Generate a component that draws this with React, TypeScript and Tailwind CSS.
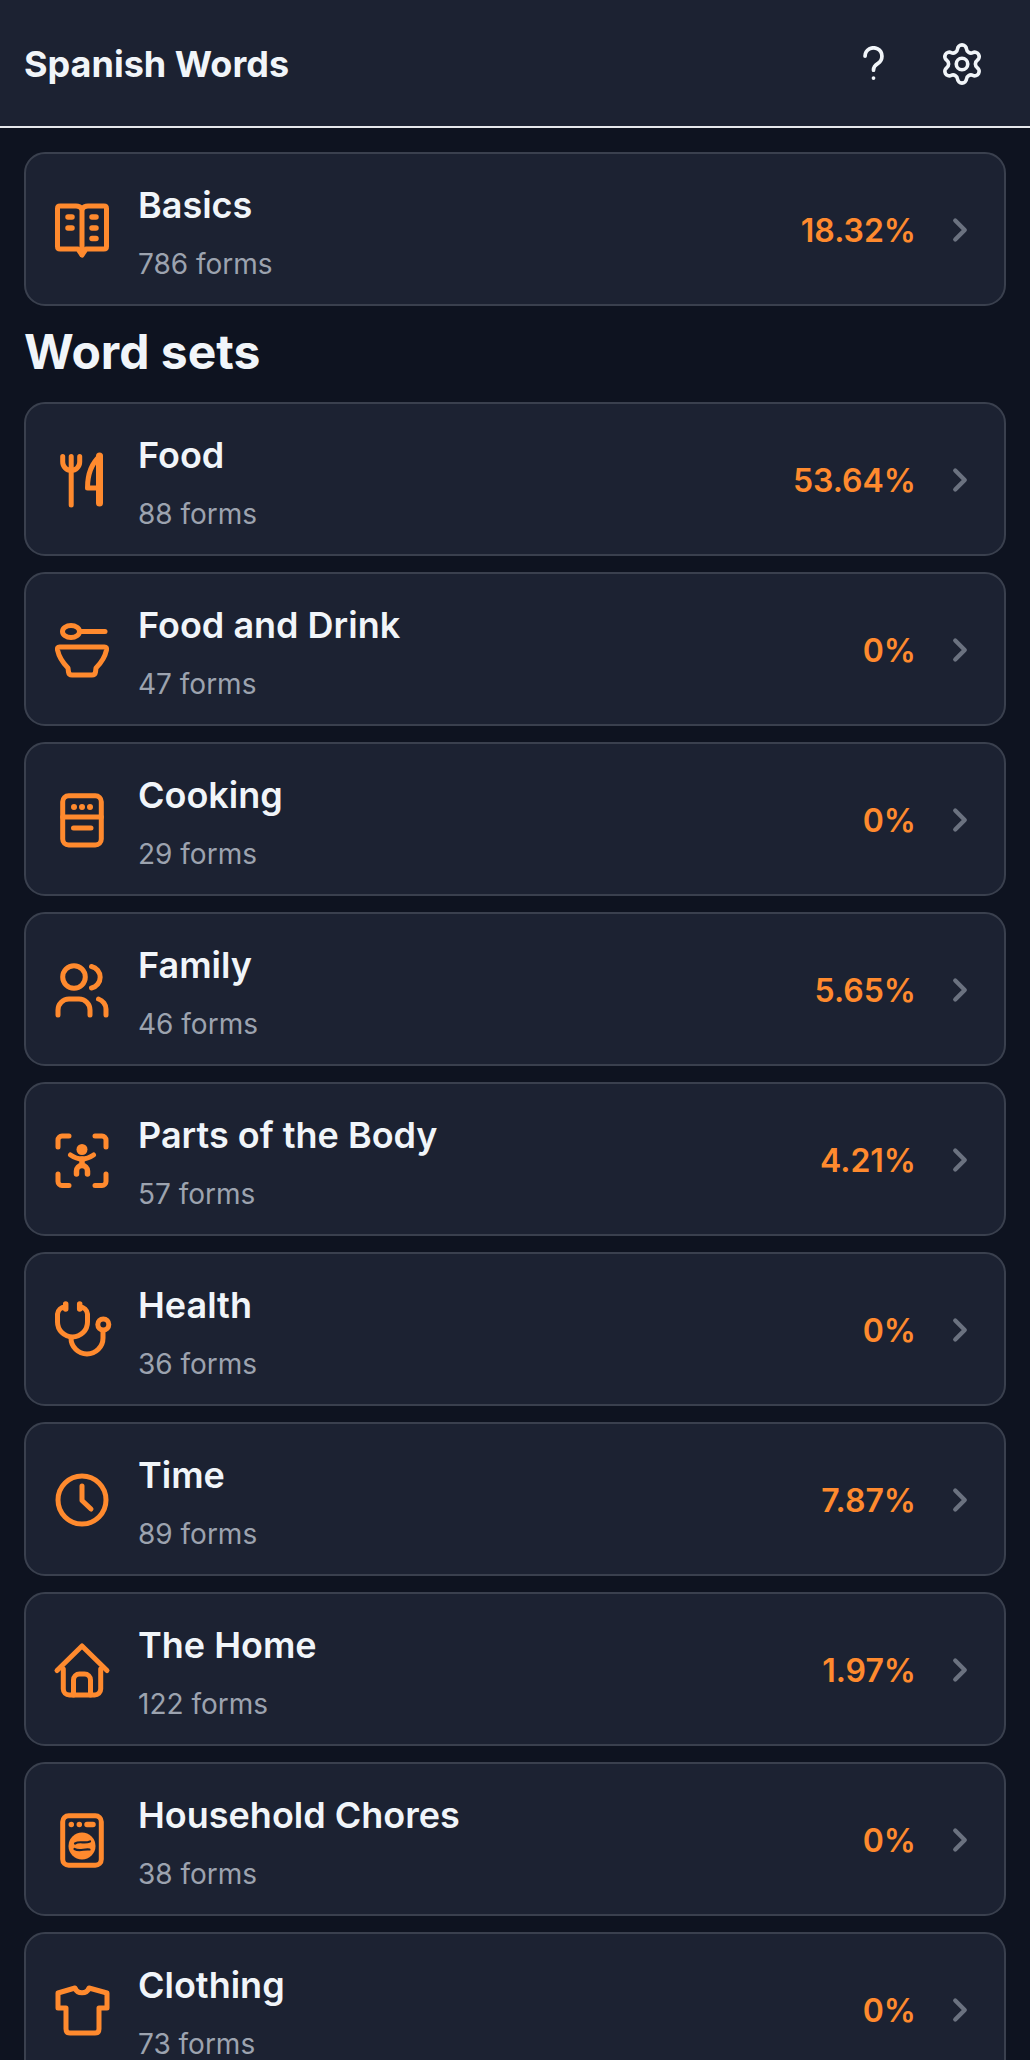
import { ChevronRight, Settings } from "lucide-react";
import type { ReactNode } from "react";

type WordSet = {
  name: string;
  forms: string;
  percent: string;
  icon: ReactNode;
};

function Glyph({ children }: { children: ReactNode }) {
  return (
    <svg
      viewBox="0 0 64 64"
      fill="none"
      stroke="currentColor"
      strokeWidth={5}
      strokeLinecap="round"
      strokeLinejoin="round"
      className="h-16 w-16 shrink-0 text-[#ff8a2e]"
    >
      {children}
    </svg>
  );
}

const basicsIcon = (
  <Glyph>
    <path d="M10 9H26Q30 9 32 12Q34 9 38 9H54Q56.5 9 56.5 11.5V49.5Q56.5 52 54 52H36L32 58L28 52H10Q7.5 52 7.5 49.5V11.5Q7.5 9 10 9Z" />
    <path d="M32 12V56" />
    <path strokeWidth={5.5} d="M18 20H22M18 31H22M42 20H46M42 31H46M42 41.5H46" />
  </Glyph>
);

const foodIcon = (
  <Glyph>
    <path d="M12.7 9.5V15a8.5 8.5 0 0 0 17 0V9.5M21.2 9.5V58" />
    <path d="M50 9C42 16 37.5 28 37.5 41H50Z" />
    <path strokeWidth={7} d="M49.5 9V56" />
  </Glyph>
);

const drinkIcon = (
  <Glyph>
    <ellipse cx="21" cy="14.5" rx="8.5" ry="6" />
    <path d="M29.5 14.5H55" />
    <path d="M9.5 30H54.5Q57 30 56.5 33C55 40 50 47 46 51L45.5 55Q45 58 42 58H22Q19 58 18.5 55L18 51C14 47 9 40 7.5 33Q7 30 9.5 30Z" />
  </Glyph>
);

const cookingIcon = (
  <Glyph>
    <rect x="12.7" y="8.8" width="38.6" height="49.2" rx="6" />
    <path d="M12.7 30H51.3M23.5 41H41" />
    <path strokeWidth={6} d="M24 20h.01M32 20h.01M40 20h.01" />
  </Glyph>
);

const familyIcon = (
  <Glyph>
    <circle cx="24" cy="20" r="11.3" />
    <path d="M8 58V53a11 11 0 0 1 11-11H29a11 11 0 0 1 11 11V58" />
    <path d="M41.5 9.5a11 11 0 0 1 0 21.5" />
    <path d="M48.5 42C53 43.5 56 48 56 52V58" />
  </Glyph>
);

const bodyIcon = (
  <Glyph>
    <path d="M19 9H12a4 4 0 0 0-4 4V20M45 9H52a4 4 0 0 1 4 4V20M19 58.5H12a4 4 0 0 1-4-4V47M45 58.5H52a4 4 0 0 0 4-4V47" />
    <circle cx="32" cy="22.5" r="5.5" fill="currentColor" stroke="none" />
    <path d="M20.5 28C25 31 28 32 32 32C36 32 39 31 43.5 28" />
    <path strokeWidth={5.5} d="M32 32V38M26.5 47V44a5.5 5.5 0 0 1 11 0V47" />
  </Glyph>
);

const healthIcon = (
  <Glyph>
    <path d="M15 10a8 8 0 0 0-7.5 7V25a15 15 0 0 0 30 0V17a8 8 0 0 0-7.5-7" />
    <path strokeWidth={5.5} d="M15.7 7V12M29.7 7V12" />
    <path d="M21 41a16 16 0 0 0 32 0V35" />
    <circle cx="53.3" cy="27.5" r="5.5" />
  </Glyph>
);

const timeIcon = (
  <Glyph>
    <circle cx="32" cy="33" r="24" />
    <path d="M32 19V33.5L41 42" />
  </Glyph>
);

const homeIcon = (
  <Glyph>
    <path d="M7 33.5L32 9L57 33.5" />
    <path d="M13.3 32V52a6 6 0 0 0 6 6H44.7a6 6 0 0 0 6-6V32" />
    <path d="M23.5 58V43a6 6 0 0 1 6-6h5a6 6 0 0 1 6 6V58" />
  </Glyph>
);

const choresIcon = (
  <Glyph>
    <rect x="12.7" y="8.8" width="38.6" height="49.4" rx="6" />
    <path strokeWidth={5.5} d="M21.3 17.5h.01M29.3 17.5h.01M37 17.5H43" />
    <circle cx="32" cy="39" r="13.5" fill="currentColor" stroke="none" />
    {/* the two water lines inside the drum */}
    <path stroke="#1c2232" strokeWidth={2.2} d="M25 36.5C30 33.5 34 37 40 34.5M24.5 42C30 45 34 41.5 39.5 42.5" />
  </Glyph>
);

const clothingIcon = (
  <Glyph>
    <path d="M25 11a7.5 7.5 0 0 0 14 0L57 16V31H49V52q0 4-4 4H20q-4 0-4-4V31H8V16Z" />
  </Glyph>
);

const wordSets: WordSet[] = [
  { name: "Food", forms: "88 forms", percent: "53.64%", icon: foodIcon },
  { name: "Food and Drink", forms: "47 forms", percent: "0%", icon: drinkIcon },
  { name: "Cooking", forms: "29 forms", percent: "0%", icon: cookingIcon },
  { name: "Family", forms: "46 forms", percent: "5.65%", icon: familyIcon },
  { name: "Parts of the Body", forms: "57 forms", percent: "4.21%", icon: bodyIcon },
  { name: "Health", forms: "36 forms", percent: "0%", icon: healthIcon },
  { name: "Time", forms: "89 forms", percent: "7.87%", icon: timeIcon },
  { name: "The Home", forms: "122 forms", percent: "1.97%", icon: homeIcon },
  { name: "Household Chores", forms: "38 forms", percent: "0%", icon: choresIcon },
  { name: "Clothing", forms: "73 forms", percent: "0%", icon: clothingIcon },
];

function SetCard({ name, forms, percent, icon }: WordSet) {
  return (
    <div className="flex h-[154px] shrink-0 items-center rounded-[21px] border-2 border-[#3a404e] bg-[#1c2232] pl-[24px] pr-[25px]">
      {icon}
      <div className="ml-[24px] flex min-w-0 flex-1 flex-col pt-[6px]">
        <span className="text-[36px] leading-[50px] font-semibold text-[#f1f5f9]">{name}</span>
        <span className="mt-[14px] text-[28px] leading-[40px] text-[#9ca3af]">{forms}</span>
      </div>
      <span className="mt-[4px] text-[32px] font-semibold text-[#ff8a2e]">{percent}</span>
      <ChevronRight size={38} strokeWidth={2.7} className="mt-[1px] ml-[25px] text-[#6b7280]" />
    </div>
  );
}

export default function App() {
  return (
    <div className="flex h-[2060px] flex-col overflow-hidden bg-[#0e1320] font-['Inter',sans-serif]">
      <header className="flex h-[128px] shrink-0 items-center justify-between border-b-2 border-[#e5e7eb] bg-[#1c2232] px-[24px]">
        <h1 className="mt-[2px] text-[36px] font-bold text-[#f1f5f9]">Spanish Words</h1>
        <div className="mt-[1px] flex items-center gap-[52px] text-[#f1f5f9]">
          <svg
            viewBox="0 0 24 32"
            fill="none"
            stroke="currentColor"
            strokeWidth={3.3}
            strokeLinecap="round"
            strokeLinejoin="round"
            className="h-[36px] w-[27px]"
          >
            <path d="M4.5 9a7.5 7.5 0 1 1 11.5 6.5c-2.5 1.5-4 3-4 6" />
            <path d="M12 28.5h.01" />
          </svg>
          <Settings size={46} strokeWidth={1.9} className="mr-[21px]" />
        </div>
      </header>
      <main className="flex flex-col gap-[16px] px-[24px] pt-[24px]">
        <SetCard name="Basics" forms="786 forms" percent="18.32%" icon={basicsIcon} />
        <h2 className="mt-[-2px] mb-[2px] text-[48px] leading-[64px] font-bold text-[#f1f5f9]">Word sets</h2>
        {wordSets.map((set) => (
          <SetCard key={set.name} {...set} />
        ))}
      </main>
    </div>
  );
}
